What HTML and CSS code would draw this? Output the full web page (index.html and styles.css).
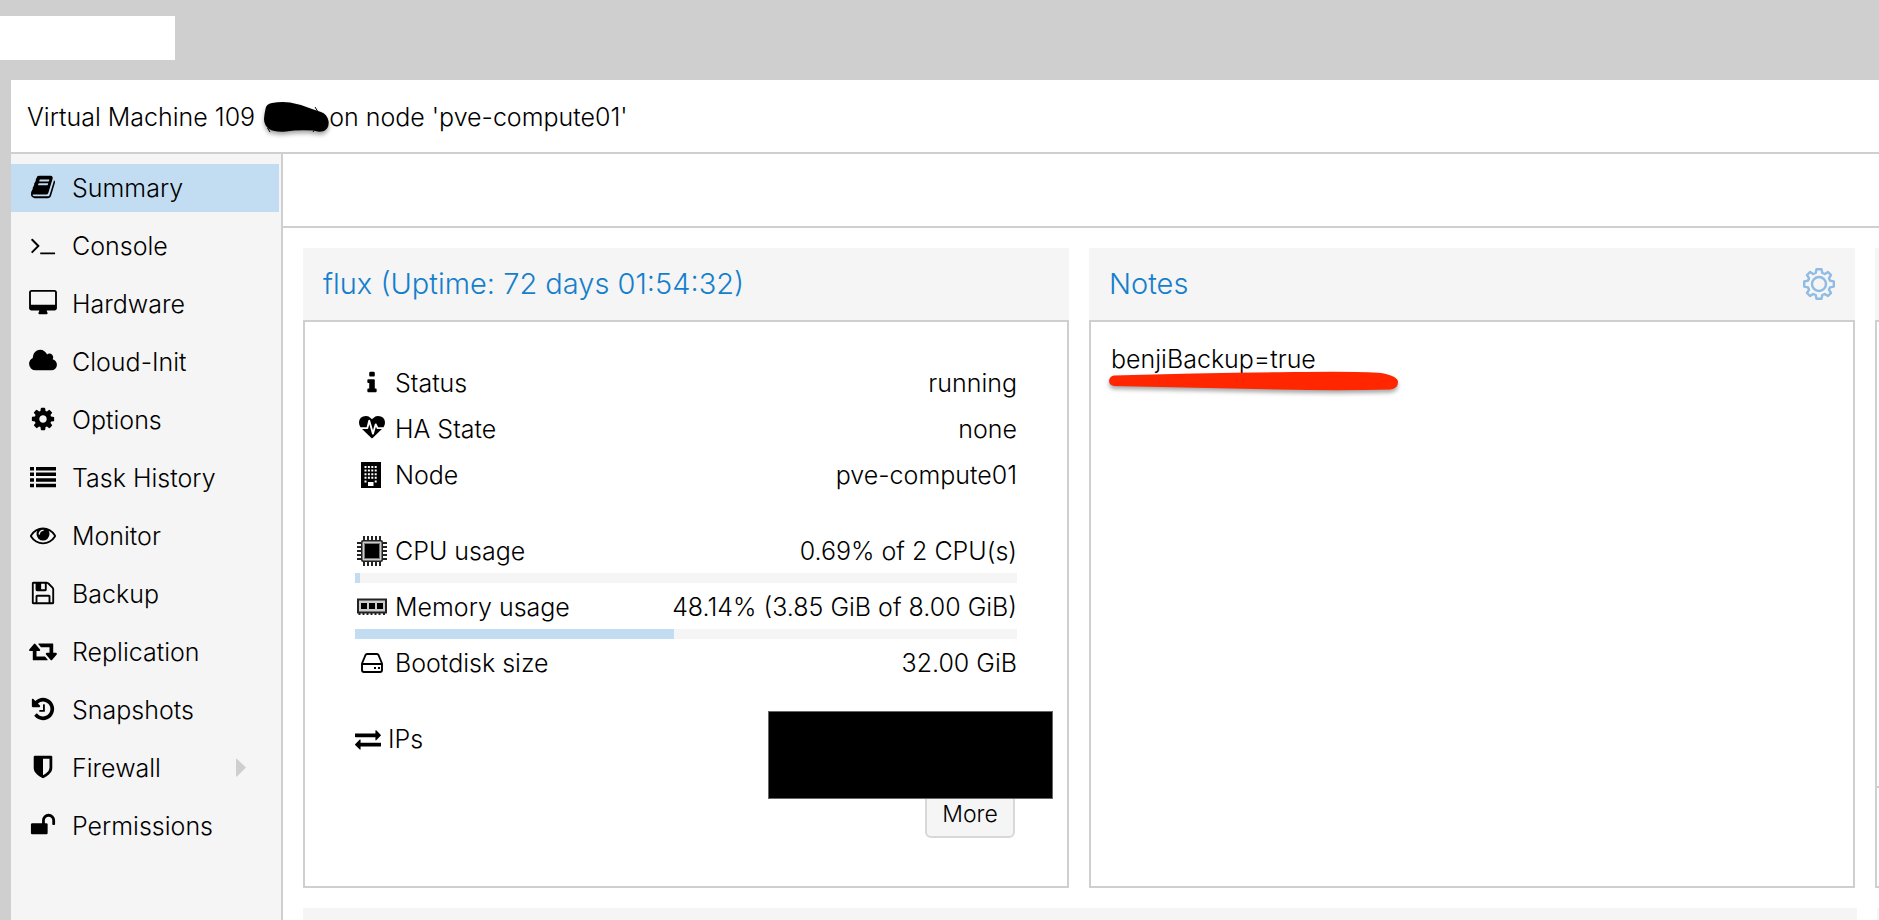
FILE: index.html
```html
<!DOCTYPE html>
<html lang="en">
<head>
<meta charset="utf-8">
<title>Virtual Machine 109</title>
<link rel="stylesheet" href="styles.css">
</head>
<body>
<div class="app">
  <div class="topbar"><div class="topbar-field"></div></div>
  <div class="vm">
    <header class="vm-header">
      <h1 class="vm-title"><span>Virtual Machine 109</span><svg class="scribble" width="65" height="30" viewBox="0 0 65 30" aria-hidden="true"><path d="M1.500 7Q2 2 8 1Q17 -.5 26 .5Q38 2.500 48 7L57 10Q63 12 64.500 19Q65.500 26 60 29Q54 30.500 50 28.500Q34 27.500 22 29.500Q11 30.500 5 27Q0 23 0 17Q.5 11 1.500 7Z"/><path fill="none" stroke="#000" d="M3.500 26l2.500 4M51 5l2.500 4M49 30l2-3"/></svg><span>on node 'pve-compute01'</span></h1>
    </header>
    <div class="vm-body">
      <nav class="sidebar">
        <ul class="menu">
          <li><a class="menu-item active" href="#"><svg class="icon" viewBox="0 0 1792 1792"><path d="M1703 478q40 57 18 129l-275 906q-19 64-76.500 107.500t-122.500 43.500h-923q-77 0-148.500-53.500t-99.500-131.500q-24-67-2-127 0-4 3-27t4-37q1-8-3-21.500t-3-19.500q2-11 8-21t16.500-23.500 16.500-23.500q23-38 45-91.500t30-91.500q3-10 .5-30t-.5-28q3-11 17-28t17-23q21-36 42-92t25-90q1-9-2.500-32t.5-28q4-13 22-30.500t22-22.500q19-26 42.500-84.500t27.500-96.500q1-8-3-25.500t-2-26.500q2-8 9-18t18-23 17-21q8-12 16.500-30.500t15-35 16-36 19.500-32 26.500-23.500 36-11.500 47.500 5.500l-1 3q38-9 51-9h761q74 0 114 56t18 130l-274 906q-36 119-71.500 153.500t-128.500 34.500h-869q-27 0-38 15-11 16-1 43 24 70 144 70h923q29 0 56-15.500t35-41.500l300-987q7-22 5-57 38 15 59 43zm-1064 2q-4 13 2 22.500t20 9.500h608q13 0 25.500-9.500t16.500-22.500l21-64q4-13-2-22.500t-20-9.500h-608q-13 0-25.500 9.500t-16.500 22.500zm-83 256q-4 13 2 22.500t20 9.500h608q13 0 25.500-9.500t16.500-22.500l21-64q4-13-2-22.500t-20-9.500h-608q-13 0-25.500 9.500t-16.500 22.500z"/></svg><span>Summary</span></a></li>
          <li><a class="menu-item" href="#"><svg class="icon" viewBox="0 0 1792 1792"><path d="M649 983l-466 466q-10 10-23 10t-23-10l-50-50q-10-10-10-23t10-23l393-393-393-393q-10-10-10-23t10-23l50-50q10-10 23-10t23 10l466 466q10 10 10 23t-10 23zm1079 457v64q0 14-9 23t-23 9h-960q-14 0-23-9t-9-23v-64q0-14 9-23t23-9h960q14 0 23 9t9 23z"/></svg><span>Console</span></a></li>
          <li><a class="menu-item" href="#"><svg class="icon" viewBox="64 0 1792 1792"><path d="M1792 992v-832q0-13-9.500-22.500t-22.500-9.500h-1600q-13 0-22.500 9.500t-9.500 22.500v832q0 13 9.500 22.500t22.500 9.500h1600q13 0 22.500-9.500t9.500-22.500zm128-832v1088q0 66-47 113t-113 47h-544q0 37 16 77.500t32 71 16 43.500q0 26-19 45t-45 19h-512q-26 0-45-19t-19-45q0-14 16-44t32-70 16-78h-544q-66 0-113-47t-47-113v-1088q0-66 47-113t113-47h1600q66 0 113 47t47 113z"/></svg><span>Hardware</span></a></li>
          <li><a class="menu-item" href="#"><svg class="icon" viewBox="128 0 1792 1792"><path d="M1984 1152q0 159-112.500 271.500t-271.500 112.500h-1088q-185 0-316.500-131.500t-131.500-316.500q0-132 71-241.500t187-163.500q-2-28-2-43 0-212 150-362t362-150q158 0 286.500 88t187.500 230q70-62 166-62 106 0 181 75t75 181q0 75-41 138 129 30 213 134.500t84 239.500z"/></svg><span>Cloud-Init</span></a></li>
          <li><a class="menu-item" href="#"><svg class="icon" viewBox="0 0 1792 1792"><path d="M1152 896q0-106-75-181t-181-75-181 75-75 181 75 181 181 75 181-75 75-181zm512-109v222q0 12-8 23t-20 13l-185 28q-19 54-39 91 35 50 107 138 10 12 10 25t-9 23q-27 37-99 108t-94 71q-12 0-26-9l-138-108q-44 23-91 38-16 136-29 186-7 28-36 28h-222q-14 0-24.500-8.500t-11.500-21.500l-28-184q-49-16-90-37l-141 107q-10 9-25 9-14 0-25-11-126-114-165-168-7-10-7-23 0-12 8-23 15-21 51-66.500t54-70.500q-27-50-41-99l-183-27q-13-2-21-12.500t-8-23.500v-222q0-12 8-23t19-13l186-28q14-46 39-92-40-57-107-138-10-12-10-24 0-10 9-23 26-36 98.500-107.500t94.500-71.500q13 0 26 10l138 107q44-23 91-38 16-136 29-186 7-28 36-28h222q14 0 24.500 8.500t11.500 21.500l28 184q49 16 90 37l142-107q9-9 24-9 13 0 25 10 129 119 165 170 7 8 7 22 0 12-8 23-15 21-51 66.500t-54 70.500q26 50 41 98l183 28q13 2 21 12.500t8 23.500z"/></svg><span>Options</span></a></li>
          <li><a class="menu-item" href="#"><svg class="icon" viewBox="0 0 26 26"><path d="M0 3h4v3.500H0zM6 3h20v3.500H6zM0 8.600h4v3.500H0zM6 8.600h20v3.500H6zM0 14.200h4v3.500H0zM6 14.200h20v3.500H6zM0 19.800h4v3.500H0zM6 19.800h20v3.500H6z"/></svg><span>Task History</span></a></li>
          <li><a class="menu-item" href="#"><svg class="icon" viewBox="0 0 1792 1792"><path d="M1664 960q-152-236-381-353 61 104 61 225 0 185-131.500 316.500t-316.500 131.500-316.500-131.500-131.500-316.500q0-121 61-225-229 117-381 353 133 205 333.500 326.500t434.500 121.500 434.500-121.500 333.500-326.500zm-720-384q0-20-14-34t-34-14q-125 0-214.500 89.500t-89.500 214.500q0 20 14 34t34 14 34-14 14-34q0-86 61-147t147-61q20 0 34-14t14-34zm848 384q0 34-20 69-140 230-376.500 368.500t-499.500 138.500-499.500-139-376.500-368q-20-35-20-69t20-69q140-229 376.500-368t499.500-139 499.500 139 376.500 368q20 35 20 69z"/></svg><span>Monitor</span></a></li>
          <li><a class="menu-item" href="#"><svg class="icon" viewBox="0 0 1792 1792"><path d="M512 1536h768v-384h-768v384zm896 0h128v-896q0-14-10-38.500t-20-34.500l-281-281q-10-10-34-20t-39-10v416q0 40-28 68t-68 28h-576q-40 0-68-28t-28-68v-416h-128v1280h128v-416q0-40 28-68t68-28h832q40 0 68 28t28 68v416zm-384-928v-320q0-13-9.500-22.500t-22.500-9.500h-192q-13 0-22.500 9.500t-9.500 22.500v320q0 13 9.500 22.500t22.500 9.500h192q13 0 22.500-9.500t9.500-22.500zm640 32v928q0 40-28 68t-68 28h-1344q-40 0-68-28t-28-68v-1344q0-40 28-68t68-28h928q40 0 88 20t76 48l280 280q28 28 48 76t20 88z"/></svg><span>Backup</span></a></li>
          <li><a class="menu-item" href="#"><svg class="icon" viewBox="128 0 1792 1792"><path d="M1344 1504q0 13-9.500 22.500t-22.500 9.500h-960q-8 0-13.500-2t-9-7-5.500-8-3-11.500-1-11.500v-600h-192q-26 0-45-19t-19-45q0-24 15-41l320-384q19-22 49-22t49 22l320 384q15 17 15 41 0 26-19 45t-45 19h-192v384h576q16 0 25 11l160 192q7 11 7 21zm640-416q0 24-15 41l-320 384q-20 23-49 23t-49-23l-320-384q-15-17-15-41 0-26 19-45t45-19h192v-384h-576q-16 0-25-12l-160-192q-7-9-7-20 0-13 9.500-22.500t22.500-9.500h960q8 0 13.500 2t9 7 5.500 8 3 11.500 1 11.500v600h192q26 0 45 19t19 45z"/></svg><span>Replication</span></a></li>
          <li><a class="menu-item" href="#"><svg class="icon" viewBox="0 0 1792 1792"><path d="M1664 896q0 156-61 298t-164 245-245 164-298 61q-172 0-327-72.500t-264-204.500q-7-10-6.500-22.500t8.500-20.500l137-138q10-9 25-9 16 2 23 12 73 95 179 147t225 52q104 0 198.500-40.500t163.500-109.500 109.500-163.500 40.500-198.500-40.500-198.500-109.500-163.500-163.500-109.500-198.500-40.500q-98 0-188 35.500t-160 101.500l137 138q31 30 14 69-17 40-59 40h-448q-26 0-45-19t-19-45v-448q0-42 40-59 39-17 69 14l130 129q107-101 244.500-156.500t284.500-55.500q156 0 298 61t245 164 164 245 61 298zm-640-288v448q0 14-9 23t-23 9h-320q-14 0-23-9t-9-23v-64q0-14 9-23t23-9h224v-352q0-14 9-23t23-9h64q14 0 23 9t9 23z"/></svg><span>Snapshots</span></a></li>
          <li><a class="menu-item" href="#"><svg class="icon" viewBox="0 0 1792 1792"><path d="M1344 960v-640h-448v1137q119-63 213-137 235-184 235-360zm192-768v768q0 86-33.500 170.500t-83 150-118 127.500-126.500 103-121 77.500-89.500 49.500-42.500 20q-12 6-26 6t-26-6q-16-7-42.500-20t-89.500-49.500-121-77.500-126.500-103-118-127.500-83-150-33.500-170.500v-768q0-26 19-45t45-19h1152q26 0 45 19t19 45z"/></svg><span>Firewall</span><svg class="expander" width="12" height="20" viewBox="0 0 12 20"><path d="M1 1Q1 0 2 1L11 9.500L2 18.500Q1 19 1 18Z"/></svg></a></li>
          <li><a class="menu-item" href="#"><svg class="icon" viewBox="0 0 1792 1792"><path d="M1728 576v256q0 26-19 45t-45 19h-64q-26 0-45-19t-19-45v-256q0-106-75-181t-181-75-181 75-75 181v192h96q40 0 68 28t28 68v576q0 40-28 68t-68 28h-960q-40 0-68-28t-28-68v-576q0-40 28-68t68-28h672v-192q0-185 131.500-316.500t316.500-131.500 316.500 131.500 131.500 316.500z"/></svg><span>Permissions</span></a></li>
        </ul>
      </nav>
      <main class="content">
        <div class="toolbar"></div>
        <div class="panels">
          <section class="panel">
            <header class="panel-header"><h2 class="panel-title">flux (Uptime: 72 days 01:54:32)</h2></header>
            <div class="panel-body status">
              <div class="row"><span class="row-icon"><svg class="icon" viewBox="0 0 1792 1792"><path d="M1216 1344v128q0 26-19 45t-45 19h-512q-26 0-45-19t-19-45v-128q0-26 19-45t45-19h64v-384h-64q-26 0-45-19t-19-45v-128q0-26 19-45t45-19h384q26 0 45 19t19 45v576h64q26 0 45 19t19 45zm-128-1152v192q0 26-19 45t-45 19h-256q-26 0-45-19t-19-45v-192q0-26 19-45t45-19h256q26 0 45 19t19 45z"/></svg></span><span class="row-label">Status</span><span>running</span></div>
              <div class="row"><span class="row-icon"><svg class="icon" viewBox="0 0 1792 1792"><path d="M1280 896h305q-5 6-10 10.500t-9 7.500l-3 4-623 600q-18 18-44 18t-44-18l-624-602q-5-2-21-20h369q22 0 39.500-13.500t22.500-34.500l70-281 190 667q6 20 23 33t39 13q21 0 38-13t23-33l146-485 56 112q18 35 57 35zm512-428q0 145-103 300h-369l-111-221q-8-17-25.500-27t-36.500-8q-45 5-56 46l-129 430-196-686q-6-20-23.500-33t-39.500-13-39 13.500-22 34.500l-116 464h-423q-103-155-103-300 0-220 127-344t351-124q62 0 126.500 21.500t120 58 95.500 68.500 76 68q36-36 76-68t95.500-68.500 120-58 126.500-21.500q224 0 351 124t127 344z"/></svg></span><span class="row-label">HA State</span><span>none</span></div>
              <div class="row"><span class="row-icon"><svg class="icon" viewBox="0 0 26 26"><path fill-rule="evenodd" d="M2 0h20v26H2zM5.500 4v2h2v-2zM8.900 4v2h2v-2zM12.300 4v2h2v-2zM15.700 4v2h2v-2zM5.500 7.600v2h2v-2zM8.900 7.600v2h2v-2zM12.300 7.600v2h2v-2zM15.700 7.600v2h2v-2zM5.500 11.200v2h2v-2zM8.900 11.200v2h2v-2zM12.300 11.200v2h2v-2zM15.700 11.200v2h2v-2zM5.500 14.800v2h2v-2zM8.900 14.800v2h2v-2zM12.300 14.800v2h2v-2zM15.700 14.800v2h2v-2zM5.500 18.400v2h2v-2zM15.700 18.400v2h2v-2zM9 20v4h5.500v-4z"/></svg></span><span class="row-label">Node</span><span>pve-compute01</span></div>
              <div class="group">
                <div class="row metric"><span class="row-icon"><svg class="chip" viewBox="0 0 30 30"><path stroke="#222" stroke-width="2" d="M7 0v30M11 0v30M15 0v30M19 0v30M23 0v30M0 7h30M0 11h30M0 15h30M0 19h30M0 23h30"/><rect x="4" y="4" width="22" height="22" rx="2" fill="#222"/><rect x="5.500" y="5.500" width="19" height="19" rx="1" fill="#ccc"/><rect x="7" y="7" width="16" height="16" fill="#777"/><rect x="8" y="8" width="14" height="14"/></svg></span><span class="row-label">CPU usage</span><span>0.69% of 2 CPU(s)</span></div>
                <div class="bar"><div class="bar-fill" style="width:0.69%"></div></div>
                <div class="row metric"><span class="row-icon"><svg class="chip" viewBox="0 0 30 30"><path stroke="#222" stroke-width="2" d="M2.500 19v4M6.500 19v4M10.500 19v4M14.500 19v4M18.500 19v4M22.500 19v4M27 19v4"/><rect y="6.500" width="30" height="15" fill="#222"/><rect x="2" y="8.500" width="26" height="11" fill="#ccc"/><path d="M4 11h6v6H4zM12 11h6v6h-6zM20 11h6v6h-6z"/></svg></span><span class="row-label">Memory usage</span><span>48.14% (3.85 GiB of 8.00 GiB)</span></div>
                <div class="bar"><div class="bar-fill" style="width:48.14%"></div></div>
                <div class="row"><span class="row-icon"><svg class="icon" viewBox="0 0 26 26"><path fill="none" stroke="#000" stroke-width="1.900" stroke-linejoin="round" d="M3 13.500L6.500 5Q7 4 8 4H18Q19 4 19.500 5L23 13.500V20Q23 22 21 22H5Q3 22 3 20ZM3.500 14H22.500"/><path d="M15 17h2v2h-2zM19 17h2v2h-2z"/></svg></span><span class="row-label">Bootdisk size</span><span>32.00 GiB</span></div>
              </div>
              <div class="ips">
                <div class="row"><span class="ip-icon"><svg class="icon" viewBox="0 0 1792 1792"><path d="M1792 1184v192q0 13-9.500 22.500t-22.500 9.500h-1376v192q0 13-9.500 22.500t-22.500 9.500q-12 0-24-10l-319-320q-9-9-9-22 0-14 9-23l320-320q9-9 23-9 13 0 22.500 9.500t9.500 22.500v192h1376q13 0 22.500 9.500t9.500 22.500zm0-544q0 14-9 23l-320 320q-9 9-23 9-13 0-22.500-9.500t-9.500-22.500v-192h-1376q-13 0-22.500-9.500t-9.500-22.500v-192q0-13 9.500-22.500t22.500-9.500h1376v-192q0-14 9-23t23-9q12 0 24 10l319 319q9 9 9 23z"/></svg></span><span class="row-label">IPs</span></div>
                <button class="more" type="button">More</button>
                <div class="redaction"></div>
              </div>
            </div>
          </section>
          <section class="panel">
            <header class="panel-header"><h2 class="panel-title">Notes</h2>
              <button class="gear" type="button" aria-label="Edit notes"><svg width="32" height="32" viewBox="0 0 32 32" fill="none" stroke="#8fbbe4" stroke-width="2.400" stroke-linejoin="round"><path d="M13.500 1.200H18.500L19.300 5L21.800 6L25 4L28 7L26 10.200L27 12.700L30.800 13.500V18.500L27 19.300L26 21.800L28 25L25 28L21.800 26L19.300 27L18.500 30.800H13.500L12.700 27L10.200 26L7 28L4 25L6 21.800L5 19.300L1.200 18.500V13.500L5 12.700L6 10.200L4 7L7 4L10.200 6L12.700 5Z"/><circle cx="16" cy="16" r="7"/></svg></button>
            </header>
            <div class="panel-body notes">
              <p class="note">benjiBackup=true</p>
              <svg class="marker" width="290" height="22" viewBox="0 0 290 22" aria-hidden="true"><path d="M5 4.500Q90 2 185 1Q250 0 272 2Q289 5 289 11Q289 18 281 18.500Q230 20 170 18.500L5 15Q0 14 0 9.500Q1 5 5 4.500Z"/></svg>
            </div>
          </section>
          <section class="panel edge">
            <header class="panel-header"></header>
            <div class="panel-body edge-body"><div class="edge-top"></div></div>
          </section>
        </div>
        <div class="charts"><div class="chart"></div><div class="chart"></div></div>
      </main>
    </div>
  </div>
</div>
</body>
</html>
```
FILE: styles.css
```css
* { box-sizing: border-box; }

body {
  margin: 0;
  font: 300 25px/46px Inter, "Liberation Sans", sans-serif;
  color: #000;
  background: #cfcfcf;
}

h1, h2, p, ul { margin: 0; padding: 0; font: inherit; }
ul { list-style: none; }

.app {
  display: flex;
  flex-direction: column;
  height: 100vh;
  overflow: hidden;
}

.topbar { flex: none; padding: 16px 0 20px; }
.topbar-field { width: 175px; height: 44px; background: #fff; }

.vm {
  flex: 1;
  min-height: 0;
  display: flex;
  flex-direction: column;
  margin-left: 11px;
  background: #fff;
}

.vm-header {
  flex: none;
  padding: 14px 16px 12px;
  border-bottom: 2px solid #cfcfcf;
}
.vm-title { display: flex; align-items: center; }
.scribble {
  margin-left: 9px;
  overflow: visible;
  filter: drop-shadow(0 3px 2px rgba(0, 0, 0, .35));
}

.vm-body {
  flex: 1;
  min-height: 0;
  display: grid;
  grid-template-columns: 272px 1fr;
}

.sidebar {
  padding: 10px 2px 0 0;
  background: #f5f5f5;
  border-right: 2px solid #cfcfcf;
}
.menu { display: grid; gap: 10px; }
.menu-item {
  display: flex;
  align-items: center;
  gap: 16px;
  height: 48px;
  padding: 0 32px 0 19px;
  color: #000;
  text-decoration: none;
}
.menu-item .icon { margin-bottom: 3px; }
.menu-item.active { background: #c2ddf2; }

.icon { display: block; width: 26px; height: 26px; overflow: visible; }
.expander { margin-left: auto; fill: #cfcfcf; }

.content { display: flex; flex-direction: column; min-width: 0; }
.toolbar { flex: none; height: 74px; border-bottom: 2px solid #cfcfcf; }

.panels {
  flex: 1;
  min-height: 0;
  display: grid;
  grid-template-columns: 1fr 1fr 4px;
  gap: 20px;
  padding: 20px 0 20px 20px;
}
.panel { display: flex; flex-direction: column; min-width: 0; }
.panel-header {
  display: flex;
  align-items: center;
  justify-content: space-between;
  height: 72px;
  padding: 0 20px;
  background: #f5f5f5;
}
.panel-title { font-size: 29px; color: #157fcc; }
.panel-body { flex: 1; border: 2px solid #cfcfcf; }

.gear { display: flex; padding: 0; border: 0; background: none; }

.status { padding: 38px 50px 0; }
.row { display: flex; align-items: center; height: 46px; }
.row-icon { flex: none; display: flex; justify-content: center; width: 33px; margin-right: 7px; }
.ip-icon { flex: none; margin-right: 7px; }
.row-label { flex: 1; }
.chip { display: block; width: 30px; height: 30px; }
.metric { height: 45px; }
.group { margin-top: 30px; }
.bar { height: 10px; margin-bottom: 1px; background: #f5f5f5; }
.bar-fill { height: 100%; min-width: 4px; background: #c2ddf2; }

.ips {
  position: relative;
  display: flex;
  flex-direction: column;
  margin-top: 30px;
}
.more {
  align-self: flex-end;
  width: 90px;
  height: 48px;
  margin: 28px 2px 0 0;
  padding: 0;
  border: 2px solid #d8d8d8;
  border-radius: 6px;
  background: #f5f5f5;
  color: #000;
  font: 300 23px/44px Inter, "Liberation Sans", sans-serif;
}
.redaction {
  position: absolute;
  top: -5px;
  right: -36px;
  width: 285px;
  height: 88px;
  background: #000;
  border: 1px solid #666;
}

.notes { position: relative; padding: 14px 20px; }
.marker {
  position: absolute;
  top: 49px;
  left: 18px;
  fill: #ff2600;
  filter: drop-shadow(0 3px 2px rgba(0, 0, 0, .35));
  overflow: visible;
}

.edge { overflow: hidden; }
.edge-body { border-right: 0; }
.edge-top { height: 466px; border-bottom: 2px solid #cfcfcf; }

.charts {
  flex: none;
  display: grid;
  grid-template-columns: 1fr 2px;
  gap: 20px;
  height: 12px;
  padding-left: 20px;
}
.chart { background: #f5f5f5; }
```
